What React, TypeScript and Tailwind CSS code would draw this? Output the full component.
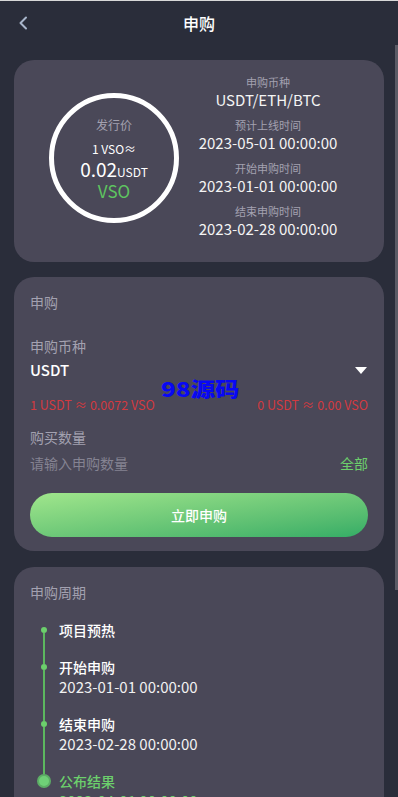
import React from 'react';

const FONT = { fontFamily: '"Noto Sans CJK SC", "Noto Sans", sans-serif' };

// info rows shown beside the price ring
const infoRows = [
  { label: '申购币种', value: 'USDT/ETH/BTC' },
  { label: '预计上线时间', value: '2023-05-01 00:00:00' },
  { label: '开始申购时间', value: '2023-01-01 00:00:00' },
  { label: '结束申购时间', value: '2023-02-28 00:00:00' },
];

const steps = [
  { title: '项目预热' },
  { title: '开始申购', date: '2023-01-01 00:00:00' },
  { title: '结束申购', date: '2023-02-28 00:00:00' },
  { title: '公布结果', date: '2023-04-01 00:00:00', active: true },
];

const Step: React.FC<{ title: string; date?: string; first: boolean; last: boolean; active?: boolean }> = ({
  title,
  date,
  first,
  last,
  active,
}) => (
  <div className="flex">
    {/* dot + connector */}
    <div className="flex w-[14px] flex-col items-center">
      <div className={`w-[2px] ${active ? 'h-[3px]' : 'h-[7px]'} ${first ? 'bg-transparent' : 'bg-[#5cb85f]'}`} />
      {active ? (
        <div className="flex h-[14px] w-[14px] items-center justify-center rounded-full bg-[#5dae66]">
          <div className="h-[10px] w-[10px] rounded-full bg-[#6fd077]" />
        </div>
      ) : (
        <div className="h-[6px] w-[6px] rounded-full bg-[#6ccf6c]" />
      )}
      <div className={`w-[2px] flex-1 ${last ? 'bg-transparent' : 'bg-[#5cb85f]'}`} />
    </div>
    <div className={`ml-[8px] ${last ? '' : 'pb-[17px]'}`}>
      <div className={`text-[14px] font-medium leading-[20px] ${active ? 'text-[#6ccf6c]' : 'text-white'}`}>{title}</div>
      {date && (
        <div className={`text-[15px] leading-[20px] ${active ? 'text-[#6ccf6c]' : 'text-[#f2f2f2]'}`}>{date}</div>
      )}
    </div>
  </div>
);

export default function App() {
  return (
    <div className="flex h-[797px] w-full flex-col overflow-hidden bg-[#2a2d3a]" style={FONT}>
      <div className="h-[1px] bg-[#d8d8d8]" />

      {/* Header */}
      <div className="flex h-[44px] items-center px-[18px]">
        <svg width="10" height="14" viewBox="0 0 10 14" className="shrink-0">
          <polyline points="8,1.5 2.5,7 8,12.5" fill="none" stroke="#a9b6cb" strokeWidth="2" strokeLinecap="round" strokeLinejoin="round" />
        </svg>
        <div className="flex-1 pr-[10px] text-center text-[16px] font-medium text-white">申购</div>
      </div>

      <div className="flex min-h-0 flex-1">
        <div className="flex flex-1 flex-col gap-[15px] pl-[14px] pr-[11px] pt-[15px]">
          {/* Price card */}
          <div className="flex items-center rounded-[20px] bg-[#4a4858] pb-[24px] pl-[35px] pr-[27px] pt-[15px]">
            <div className="mt-[3px] flex h-[130px] w-[130px] shrink-0 flex-col items-center justify-center rounded-full border-[5px] border-white">
              <div className="mb-[8px] text-[12px] leading-[16px] text-[#a3a1b0]">发行价</div>
              <div className="mb-[2px] text-[12px] leading-[16px] text-white">1 VSO≈</div>
              <div className="flex items-baseline leading-[20px] text-white">
                <span className="text-[19px] leading-[20px]">0.02</span>
                <span className="text-[12px] leading-[20px]">USDT</span>
              </div>
              <div className="text-[17px] leading-[18px] text-[#5ec460]">VSO</div>
            </div>
            <div className="flex flex-1 flex-col gap-[9px] text-center">
              {infoRows.map((r) => (
                <div key={r.label}>
                  <div className="text-[11px] leading-[15px] text-[#a3a1b0]">{r.label}</div>
                  <div className="text-[15px] leading-[19px] text-[#f4f4f4]">{r.value}</div>
                </div>
              ))}
            </div>
          </div>

          {/* Subscribe form */}
          <div className="relative flex flex-col rounded-[20px] bg-[#4a4858] px-[16px] pb-[14px] pt-[15px]">
            <div className="text-[14px] leading-[20px] text-[#a3a1b0]">申购</div>
            <div className="mt-[24px] text-[14px] leading-[20px] text-[#a3a1b0]">申购币种</div>
            <div className="mt-[2px] flex h-[24px] items-center justify-between">
              <span className="text-[15px] font-medium text-white">USDT</span>
              <svg width="12" height="7" viewBox="0 0 12 7" className="mr-[1px]">
                <polygon points="0,0 12,0 6,7" fill="#ffffff" />
              </svg>
            </div>
            <div className="mt-[15px] flex justify-between text-[12.5px] leading-[16px] text-[#d23a40]">
              <span>1 USDT ≈ 0.0072 VSO</span>
              <span>0 USDT ≈ 0.00 VSO</span>
            </div>
            <div className="mt-[14px] text-[14px] leading-[20px] text-[#a3a1b0]">购买数量</div>
            <div className="mt-[6px] flex justify-between text-[14px] leading-[20px]">
              <span className="text-[#858392]">请输入申购数量</span>
              <span className="text-[#6ccf6c]">全部</span>
            </div>
            <button className="mt-[20px] h-[44px] w-full rounded-full bg-gradient-to-br from-[#a0e68c] to-[#33ad66] text-[14px] font-medium text-white">
              立即申购
            </button>

            {/* watermark */}
            <div className="absolute left-[147px] top-[102px] origin-left scale-x-[1.22] text-[20px] font-black leading-[20px] text-[#0808f4]">
              98源码
            </div>
          </div>

          {/* Timeline */}
          <div className="mt-[1px] rounded-[20px] bg-[#4a4858] px-[16px] pb-[20px] pt-[15px]">
            <div className="text-[14px] leading-[20px] text-[#a3a1b0]">申购周期</div>
            <div className="mt-[18px] pl-[7px]">
              {steps.map((s, i) => (
                <Step key={s.title} {...s} first={i === 0} last={i === steps.length - 1} />
              ))}
            </div>
          </div>
        </div>

        {/* scrollbar */}
        <div className="w-[3px] shrink-0">
          <div className="h-[545px] bg-[#5b5b66]" />
        </div>
      </div>
    </div>
  );
}
